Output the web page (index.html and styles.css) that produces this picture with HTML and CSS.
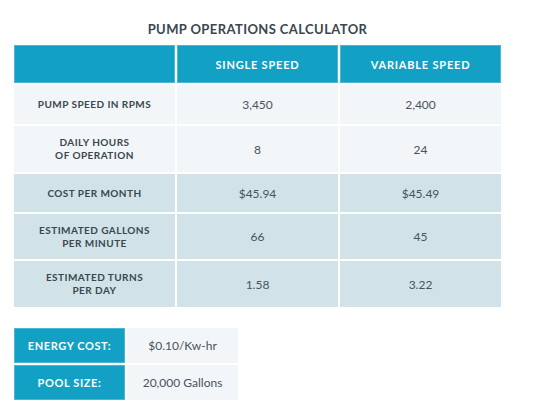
FILE: index.html
```html
<!DOCTYPE html>
<html lang="en">
<head>
    <meta charset="utf-8">
    <meta name="viewport" content="width=device-width, initial-scale=1">
    <title>Pump Operations Calculator</title>
    <link rel="stylesheet" href="styles.css">
</head>
<body>
    <div class="calculator">
        <h1 class="calc-title">Pump Operations Calculator</h1>

        <table class="compare-table">
            <thead>
                <tr class="row-head">
                    <th></th>
                    <th>Single Speed</th>
                    <th>Variable Speed</th>
                </tr>
            </thead>
            <tbody>
                <tr class="row-light row-a">
                    <th>Pump speed in RPMs</th>
                    <td>3,450</td>
                    <td>2,400</td>
                </tr>
                <tr class="row-light row-b">
                    <th>Daily hours<br>of operation</th>
                    <td>8</td>
                    <td>24</td>
                </tr>
                <tr class="row-dark row-c">
                    <th>Cost per month</th>
                    <td>$45.94</td>
                    <td>$45.49</td>
                </tr>
                <tr class="row-dark row-d">
                    <th>Estimated gallons<br>per minute</th>
                    <td>66</td>
                    <td>45</td>
                </tr>
                <tr class="row-dark row-b">
                    <th>Estimated turns<br>per day</th>
                    <td>1.58</td>
                    <td>3.22</td>
                </tr>
            </tbody>
        </table>

        <table class="inputs-table">
            <tr>
                <th>Energy cost:</th>
                <td>$0.10/Kw-hr</td>
            </tr>
            <tr>
                <th>Pool size:</th>
                <td>20,000 Gallons</td>
            </tr>
        </table>
    </div>
</body>
</html>
```

FILE: styles.css
```css
* {
    margin: 0;
    padding: 0;
    box-sizing: border-box;
    font-family: 'Lato', 'Open Sans', sans-serif;
}

body {
    background: #fff;
    color: #3b4650;
}

.calculator {
    width: 491px;
    margin-left: 12px;
    padding-top: 20px;
}

.calc-title {
    text-align: center;
    font-size: 13px;
    font-weight: 700;
    letter-spacing: 0.4px;
    text-transform: uppercase;
    color: #3b4650;
    line-height: 18px;
    margin-bottom: 5px;
}

.compare-table,
.inputs-table {
    border-collapse: separate;
    border-spacing: 2px;
}

.compare-table {
    width: 491px;
    table-layout: fixed;
}

.compare-table th,
.compare-table td {
    width: 161px;
    text-align: center;
    vertical-align: middle;
}

.compare-table th {
    font-size: 10px;
    font-weight: 700;
    letter-spacing: 0.45px;
    text-transform: uppercase;
    line-height: 13px;
    color: #3b4650;
}

.compare-table td {
    font-size: 12px;
    font-weight: 400;
    color: #48535d;
}

.row-head th {
    height: 38px;
    background: #12a0c5;
    border: 1px solid #4db6d5;
    color: #fff;
    font-size: 11px;
    letter-spacing: 0.8px;
}

.row-a th,
.row-a td {
    height: 39px;
}

.row-b th,
.row-b td {
    height: 46px;
}

.row-c th,
.row-c td {
    height: 38px;
}

.row-d th,
.row-d td {
    height: 45px;
}

.row-light th,
.row-light td {
    background: #f2f6f8;
}

.row-dark th,
.row-dark td {
    background: #d1e3e8;
}

.inputs-table {
    margin-top: 17px;
}

.inputs-table th,
.inputs-table td {
    width: 111px;
    height: 35px;
    text-align: center;
    vertical-align: middle;
}

.inputs-table th {
    background: #12a0c5;
    border: 1px solid #4db6d5;
    color: #fff;
    font-size: 11px;
    font-weight: 700;
    letter-spacing: 0.6px;
    text-transform: uppercase;
}

.inputs-table td {
    background: #f2f6f8;
    font-size: 12px;
    color: #48535d;
}
```
